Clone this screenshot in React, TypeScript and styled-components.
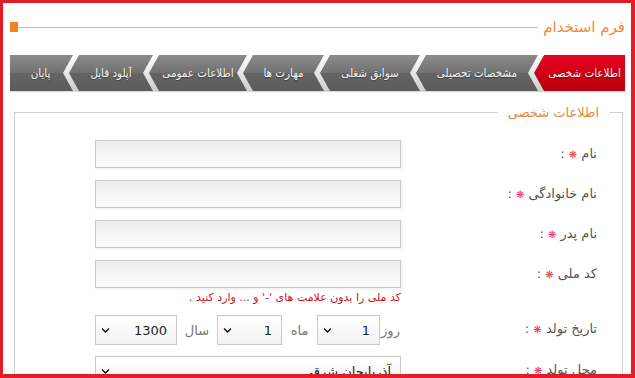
import { FC, Fragment, useId } from "react";
import styled, { createGlobalStyle } from "styled-components";
import { FaChevronDown } from "react-icons/fa";

const GlobalStyle = createGlobalStyle`
  html, body {
    margin: 0;
    padding: 0;
    background: #fff;
  }
  body {
    font-family: "DejaVu Sans", sans-serif;
  }
  * {
    box-sizing: border-box;
  }
`;

const Frame = styled.div`
  width: 635px;
  height: 378px;
  border: 3px solid #e31d25;
  border-right-width: 4px;
  border-bottom-width: 4px;
  overflow: hidden;
  padding: 14px 6px 0 7px;
  direction: rtl;
  background: #fff;
`;

const TitleBar = styled.div`
  display: flex;
  align-items: center;
  height: 20px;
`;

const Title = styled.h1`
  margin: 0 0 0 5px;
  font-size: 15px;
  font-weight: normal;
  line-height: 20px;
  color: #ee8a3c;
  white-space: nowrap;
`;

const TitleLine = styled.div`
  flex: 1;
  height: 1px;
  background: #bdbdbd;
`;

const TitleMark = styled.span`
  width: 8px;
  height: 10px;
  background: #f5821f;
`;

const Steps = styled.nav`
  display: flex;
  height: 36px;
  margin-top: 18px;
  background: linear-gradient(#8b8b8b, #717171 50%, #646464 51%, #5c5c5c);
  box-shadow: 0 1px 1px rgba(0, 0, 0, 0.15);
`;

const Step = styled.div<{ $w?: number; $active?: boolean }>`
  flex: ${(p) => (p.$w ? "none" : "1")};
  width: ${(p) => (p.$w ? `${p.$w}px` : "auto")};
  display: flex;
  align-items: center;
  justify-content: center;
  padding-left: ${(p) => (p.$w ? "0" : "8px")};
  color: #f6f6f6;
  font-family: "DejaVu Sans Condensed", "DejaVu Sans", sans-serif;
  font-size: 11.5px;
  white-space: nowrap;
  text-shadow: 0 1px 1px rgba(0, 0, 0, 0.35);
  background: ${(p) =>
    p.$active ? "linear-gradient(#e8031f, #cf0016 50%, #b8000f)" : "transparent"};
`;

const Section = styled.fieldset`
  margin: 13px 2px 0 4px;
  border: 1px solid #d0d0d0;
  padding: 19px 0 20px 0;
`;

const SectionTitle = styled.legend`
  margin-right: 13px;
  padding: 0 10px;
  font-size: 13px;
  line-height: 17px;
  color: #e9873a;
`;

const FormGrid = styled.div`
  display: grid;
  grid-template-columns: 196px 306px;
  row-gap: 11px;
  padding-right: 25px;
  align-items: start;
`;

const Label = styled.label`
  font-size: 13px;
  line-height: 28px;
  color: #555;
  white-space: nowrap;
`;

const Star = styled.span`
  color: #e8304f;
  font-size: 10px;
`;

const Field = styled.div`
  display: flex;
  flex-direction: column;
`;

const TextInput = styled.input`
  width: 306px;
  height: 28px;
  border: 1px solid #cacaca;
  background: linear-gradient(#ebebeb, #f6f6f6 55%, #fcfcfc);
  box-shadow: 1px 1px 3px rgba(0, 0, 0, 0.08);
  outline: none;
  padding: 0 8px;
  font: inherit;
  font-size: 13px;
`;

const Hint = styled.div`
  margin-top: 3px;
  font-size: 11px;
  line-height: 13px;
  color: #cc1111;
  white-space: nowrap;
`;

const DateRow = styled.div`
  display: flex;
  align-items: center;
  height: 30px;
`;

const Unit = styled.span<{ $w: number }>`
  width: ${(p) => p.$w}px;
  flex: none;
  text-align: center;
  font-size: 13px;
  color: #777;
`;

const SelectBox = styled.div<{ $w: number }>`
  width: ${(p) => p.$w}px;
  flex: none;
  height: 30px;
  display: flex;
  align-items: center;
  justify-content: space-between;
  padding: 0 9px 0 5px;
  border: 1px solid #cacaca;
  background: linear-gradient(#ffffff, #f3f3f3);
  font-size: 13px;
  color: #222;
  cursor: pointer;
`;

const Chevron: FC<{ active?: boolean }> = ({ active }) => {
  const id = useId();
  return (
    <svg width="16" height="36" viewBox="0 0 16 36" style={{ flex: "none" }}>
      <defs>
        <linearGradient id={`${id}b`} x1="0" y1="0" x2="0" y2="1">
          <stop offset="0" stopColor="#ffffff" />
          <stop offset="0.5" stopColor="#e6e6e6" />
          <stop offset="1" stopColor="#cfcfcf" />
        </linearGradient>
        <linearGradient id={`${id}r`} x1="0" y1="0" x2="0" y2="1">
          <stop offset="0" stopColor="#e8031f" />
          <stop offset="0.5" stopColor="#cf0016" />
          <stop offset="1" stopColor="#b8000f" />
        </linearGradient>
      </defs>
      {active && <polygon points="16,0 6,18 16,36" fill={`url(#${id}r)`} />}
      <polygon points="10,0 16,0 6,18 16,36 10,36 0,18" fill={`url(#${id}b)`} />
    </svg>
  );
};

const Select: FC<{ w: number; value: string }> = ({ w, value }) => (
  <SelectBox $w={w}>
    <span>{value}</span>
    <FaChevronDown size={9} color="#111" />
  </SelectBox>
);

const steps = [
  { title: "اطلاعات شخصی", w: 81 },
  { title: "مشخصات تحصیلی", w: 102 },
  { title: "سوابق شغلی", w: 80 },
  { title: "مهارت ها", w: 61 },
  { title: "اطلاعات عمومی", w: 78 },
  { title: "آپلود فایل", w: 64 },
  { title: "پایان", w: 0 },
];

const Req: FC<{ text: string }> = ({ text }) => (
  <Label>
    {text} <Star>❋</Star> :
  </Label>
);

const App: FC = () => {
  return (
    <>
      <GlobalStyle />
      <Frame>
        <TitleBar>
          <Title>فرم استخدام</Title>
          <TitleLine />
          <TitleMark />
        </TitleBar>

        <Steps>
          {steps.map((s, i) => (
            <Fragment key={s.title}>
              <Step $w={s.w || undefined} $active={i === 0}>
                {s.title}
              </Step>
              {i < steps.length - 1 && <Chevron active={i === 0} />}
            </Fragment>
          ))}
        </Steps>

        <Section>
          <SectionTitle>اطلاعات شخصی</SectionTitle>
          <FormGrid>
            <Req text="نام" />
            <TextInput />

            <Req text="نام خانوادگی" />
            <TextInput />

            <Req text="نام پدر" />
            <TextInput />

            <Req text="کد ملی" />
            <Field>
              <TextInput />
              <Hint>کد ملی را بدون علامت های '-' و ... وارد کنید .</Hint>
            </Field>

            <Req text="تاریخ تولد" />
            <DateRow>
              <Unit $w={21}>روز</Unit>
              <Select w={63} value="1" />
              <Unit $w={35}>ماه</Unit>
              <Select w={65} value="1" />
              <Unit $w={40}>سال</Unit>
              <Select w={82} value="1300" />
            </DateRow>

            <Req text="محل تولد" />
            <Select w={306} value="آذربایجان شرقی" />
          </FormGrid>
        </Section>
      </Frame>
    </>
  );
};

export default App;
